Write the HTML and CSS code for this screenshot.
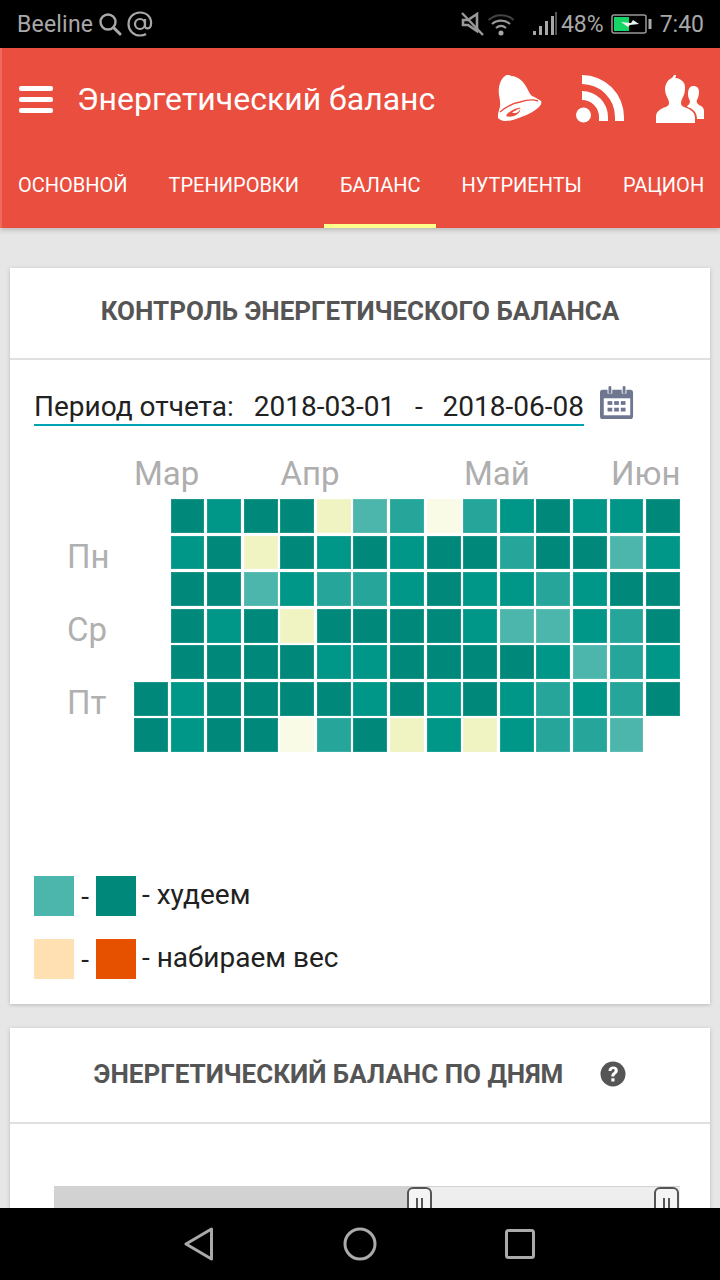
FILE: index.html
```html
<!DOCTYPE html>
<html>
<head>
    <meta charset="utf-8">
    <title>Энергетический баланс</title>
    <link rel="stylesheet" href="styles.css">
</head>
<body>
    <div class="statusbar">
        <div class="status-left">
            <span class="carrier">Beeline</span>
            <svg class="st-search" width="24" height="26" viewBox="0 0 24 26"><circle cx="10" cy="11" r="7.5" fill="none" stroke="#a8a8a8" stroke-width="2.4"/><path d="M15.5 16.5l6.5 6.5" stroke="#a8a8a8" stroke-width="3" stroke-linecap="round"/></svg>
            <svg class="st-at" width="26" height="26" viewBox="0 0 26 26"><circle cx="13" cy="13" r="5" fill="none" stroke="#a8a8a8" stroke-width="2.2"/><path d="M18 8v7c0 3.500 5.500 3.500 6 -1.500C25 6 19.500 1.500 13 1.500 6.500 1.500 1.500 6.500 1.500 13S6.500 24.500 13 24.500c2.500 0 4.500-.5 6-1.500" fill="none" stroke="#a8a8a8" stroke-width="2.2"/></svg>
        </div>
        <div class="status-right">
            <svg class="st-mute" width="24" height="24" viewBox="0 0 24 24"><path d="M3 8h5l9-6v17l-9-6H3z" fill="none" stroke="#999" stroke-width="2.600"/><path d="M2 1l21 22" stroke="#999" stroke-width="2.400"/></svg>
            <svg class="st-wifi" width="28" height="24" viewBox="0 0 28 24"><path d="M1.500 8C8.500 1.500 19.500 1.500 26.500 8" fill="none" stroke="#444" stroke-width="2"/><path d="M5 12c5-4.500 13-4.500 18 0" fill="none" stroke="#999" stroke-width="2.200"/><path d="M9 16c3-2.500 7-2.500 10 0" fill="none" stroke="#999" stroke-width="2.200"/><circle cx="14" cy="21" r="2.500" fill="#a8a8a8"/></svg>
            <svg class="st-signal" width="24" height="24" viewBox="0 0 24 24"><rect x="0" y="19" width="3" height="4" fill="#a8a8a8"/><rect x="6" y="14" width="3" height="9" fill="#a8a8a8"/><rect x="12" y="9" width="3" height="14" fill="#a8a8a8"/><rect x="18" y="4" width="3" height="19" fill="#a8a8a8"/><rect x="22" y="0" width="2" height="23" fill="#555"/></svg>
            <span class="battery-pct">48%</span>
            <svg class="st-battery" width="41" height="20" viewBox="0 0 41 20"><rect x="1" y="1" width="34" height="18" rx="2" fill="none" stroke="#999" stroke-width="1.500"/><rect x="3" y="3" width="15" height="14" fill="#14d566"/><path d="M10 8l10 1 2-3 6 4-9 1-2 2z" fill="#e8f2ea"/><rect x="37.500" y="5" width="3" height="10" fill="#aaa"/></svg>
            <span class="clock">7:40</span>
        </div>
    </div>

    <header class="appbar">
        <div class="toolbar">
            <div class="burger"><span></span><span></span><span></span></div>
            <div class="page-title">Энергетический баланс</div>
            <div class="toolbar-icons">
                <svg class="ic-bell" width="44" height="48" viewBox="0 0 44 48"><path d="M7 1c2-1.500 4-1.500 6 0 4 0 8 2 11 5 3 3 5 7 7 11 1 2 2 3 3 4 3 1 6 3 9 5 1 2 0 4-2 6-5 5-14 9-23 12-6 2-12 3-15 1-3-1-4-3-3-6l1-4C3 30 2 26 1 20 0 12 2 5 7 1z" fill="#fff"/><path d="M2 37c6-5 13-9 20-10 6-2 13-3 18-1" fill="none" stroke="#e94e3e" stroke-width="1.400"/><path d="M8 41c2-4 7-7 14-8.500 1 4-2 7-6 8.500-3 1-6 1-8 0z" fill="#e94e3e"/><path d="M14 38c2-2 5-3.500 8-4.500 0 2-2 4-4 4.500z" fill="#fff"/></svg>
                <svg class="ic-rss" width="48" height="48" viewBox="0 0 48 48"><circle cx="7.500" cy="40" r="7.500" fill="#fff"/><path d="M6 16A26 26 0 0 1 32 42v4h-9v-4A17 17 0 0 0 6 25z" fill="#fff"/><path d="M6 0A42 42 0 0 1 48 42v4h-9v-4A33 33 0 0 0 6 9z" fill="#fff"/></svg>
                <svg class="ic-users" width="48" height="48" viewBox="0 0 48 48"><path d="M20 0c0 1 0 2-1 3 4 0 7 2 9 5 1 2 1 4 1 6 0 3-1 6-2 8-1 2-2 4-2 6 0 2 1 3 3 4 5 2 11 4 11 11v5H0v-6c0-5 3-7 7-9 3-1 6-2 6-5 0-2-1-4-2-6-1-2-2-5-2-8 0-4 2-8 5-10 2-1 3-2 4-4z" fill="#fff"/><path d="M37 11c4 0 6 2 6 6 0 3-1 6-2 8-1 2 0 3 2 5 3 1 5 3 5 6v8h-7c0-6-3-9-7-11-2-1-3-1-3-2 2-1 3-3 3-5-1-2-2-4-2-7 0-5 2-8 5-8z" fill="#fff"/></svg>
            </div>
        </div>
        <nav class="tabs">
            <div class="tab">ОСНОВНОЙ</div>
            <div class="tab">ТРЕНИРОВКИ</div>
            <div class="tab active">БАЛАНС</div>
            <div class="tab">НУТРИЕНТЫ</div>
            <div class="tab">РАЦИОН</div>
        </nav>
    </header>

    <main class="content">
        <section class="card card-balance">
            <h2 class="card-title">КОНТРОЛЬ ЭНЕРГЕТИЧЕСКОГО БАЛАНСА</h2>
            <div class="card-body">
                <div class="period">
                    <div class="period-text">
                        <span>Период отчета:</span>
                        <span>2018-03-01</span>
                        <span>-</span>
                        <span>2018-06-08</span>
                    </div>
                    <svg class="cal-icon" width="34" height="34" viewBox="0 0 36 36"><path d="M4 4h4v4h5V4h10v4h5V4h4c2 0 3 1 3 3v25c0 2-1 3-3 3H3c-2 0-3-1-3-3V7c0-2 1-3 3-3z" fill="#6f7690"/><rect x="9" y="0" width="3" height="8" rx="1.500" fill="#6f7690"/><rect x="24" y="0" width="3" height="8" rx="1.500" fill="#6f7690"/><rect x="4" y="13" width="28" height="18" fill="#fff"/><g fill="#6f7690"><rect x="8" y="16" width="5" height="4"/><rect x="15" y="16" width="5" height="4"/><rect x="22" y="16" width="5" height="4"/><rect x="8" y="23" width="5" height="4"/><rect x="15" y="23" width="5" height="4"/><rect x="22" y="23" width="5" height="4"/></g></svg>
                </div>

                <div class="heatmap">
                    <div class="days">
                        <span>Пн</span>
                        <span>Ср</span>
                        <span>Пт</span>
                    </div>
                    <div class="map">
                        <div class="months">
                            <span class="m-mar">Мар</span>
                            <span class="m-apr">Апр</span>
                            <span class="m-may">Май</span>
                            <span class="m-jun">Июн</span>
                        </div>
                        <div class="cells">
                            <i class="c0"></i><i class="c1"></i><i class="c2"></i><i class="c1"></i><i class="c1"></i><i class="c5"></i><i class="c4"></i><i class="c3"></i><i class="c6"></i><i class="c3"></i><i class="c2"></i><i class="c1"></i><i class="c2"></i><i class="c2"></i><i class="c1"></i>
                            <i class="c0"></i><i class="c2"></i><i class="c1"></i><i class="c5"></i><i class="c1"></i><i class="c2"></i><i class="c1"></i><i class="c2"></i><i class="c1"></i><i class="c1"></i><i class="c3"></i><i class="c1"></i><i class="c1"></i><i class="c4"></i><i class="c2"></i>
                            <i class="c0"></i><i class="c1"></i><i class="c1"></i><i class="c4"></i><i class="c2"></i><i class="c3"></i><i class="c3"></i><i class="c2"></i><i class="c1"></i><i class="c2"></i><i class="c2"></i><i class="c3"></i><i class="c2"></i><i class="c1"></i><i class="c1"></i>
                            <i class="c0"></i><i class="c1"></i><i class="c2"></i><i class="c1"></i><i class="c5"></i><i class="c1"></i><i class="c1"></i><i class="c1"></i><i class="c1"></i><i class="c2"></i><i class="c4"></i><i class="c4"></i><i class="c2"></i><i class="c3"></i><i class="c1"></i>
                            <i class="c0"></i><i class="c1"></i><i class="c1"></i><i class="c1"></i><i class="c1"></i><i class="c2"></i><i class="c2"></i><i class="c1"></i><i class="c1"></i><i class="c1"></i><i class="c1"></i><i class="c2"></i><i class="c4"></i><i class="c3"></i><i class="c2"></i>
                            <i class="c1"></i><i class="c2"></i><i class="c1"></i><i class="c1"></i><i class="c1"></i><i class="c1"></i><i class="c2"></i><i class="c1"></i><i class="c2"></i><i class="c1"></i><i class="c2"></i><i class="c3"></i><i class="c2"></i><i class="c3"></i><i class="c1"></i>
                            <i class="c1"></i><i class="c2"></i><i class="c1"></i><i class="c1"></i><i class="c6"></i><i class="c3"></i><i class="c1"></i><i class="c5"></i><i class="c2"></i><i class="c5"></i><i class="c2"></i><i class="c3"></i><i class="c3"></i><i class="c4"></i><i class="c0"></i>
                        </div>
                    </div>
                </div>

                <div class="legend">
                    <div class="legend-row">
                        <span class="swatch teal-light"></span><span class="dash">-</span><span class="swatch teal-dark"></span><span class="legend-text">- худеем</span>
                    </div>
                    <div class="legend-row">
                        <span class="swatch orange-light"></span><span class="dash">-</span><span class="swatch orange-dark"></span><span class="legend-text">- набираем вес</span>
                    </div>
                </div>
            </div>
        </section>

        <section class="card card-days">
            <h2 class="card-title title-help">
                ЭНЕРГЕТИЧЕСКИЙ БАЛАНС ПО ДНЯМ
                <svg class="help" width="26" height="26" viewBox="0 0 26 26"><circle cx="13" cy="13" r="12.500" fill="#555"/><path d="M8.500 10c0-3 2-4.500 4.700-4.500 2.800 0 4.600 1.600 4.600 4 0 3.500-3.500 3.500-3.500 6h-3c0-4 3.300-4 3.300-6 0-.9-.6-1.400-1.500-1.400-1 0-1.600.7-1.600 1.900z" fill="#fff"/><rect x="11.300" y="17.300" width="3.200" height="3.200" fill="#fff"/></svg>
            </h2>
            <div class="slider">
                <div class="slider-fill"></div>
                <div class="slider-rest"></div>
                <div class="handle handle-a"><b></b><b></b></div>
                <div class="handle handle-b"><b></b><b></b></div>
            </div>
        </section>
    </main>

    <div class="navbar">
        <svg width="32" height="34" viewBox="0 0 32 34"><path d="M28.500 2L3 17l25.500 15z" fill="none" stroke="#aaa" stroke-width="3" stroke-linejoin="round"/></svg>
        <svg width="34" height="34" viewBox="0 0 34 34"><circle cx="17" cy="17" r="15" fill="none" stroke="#aaa" stroke-width="3"/></svg>
        <svg width="30" height="30" viewBox="0 0 30 30"><rect x="1.500" y="1.500" width="27" height="27" rx="2" fill="none" stroke="#aaa" stroke-width="3"/></svg>
    </div>
</body>
</html>
```

FILE: styles.css
```css
* {
    box-sizing: border-box;
}
html, body {
    margin: 0;
    padding: 0;
}
body {
    width: 720px;
    height: 1280px;
    overflow: hidden;
    background-color: #e6e6e6;
    font-family: Roboto, "Noto Sans", sans-serif;
    color: #212121;
}

/* статус-бар */
.statusbar {
    display: flex;
    justify-content: space-between;
    align-items: center;
    height: 48px;
    padding: 0 16px 0 17px;
    background-color: #000;
    color: #a8a8a8;
    font-size: 23px;
}
.status-left, .status-right {
    display: flex;
    align-items: center;
}
.carrier {
    margin-right: 5px;
    letter-spacing: .2px;
}
.st-search {
    margin-right: 5px;
}
.st-mute {
    margin-right: 3px;
}
.st-wifi {
    margin-right: 18px;
}
.st-signal {
    margin-right: 4px;
}
.battery-pct {
    margin-right: 7px;
}
.st-battery {
    margin-right: 8px;
}

/* шапка */
.appbar {
    height: 180px;
    background-color: #e94e3e;
    border-left: 2px solid #ee6a5c;
    box-shadow: 0 2px 5px rgba(0, 0, 0, .2);
    color: #fff;
}
.toolbar {
    display: flex;
    align-items: center;
    height: 102px;
    padding-left: 17px;
}
.burger {
    display: flex;
    flex-direction: column;
    gap: 6px;
    width: 34px;
    margin-right: 24px;
}
.burger span {
    display: block;
    height: 5px;
    border-radius: 2px;
    background-color: #fff;
}
.page-title {
    font-size: 32px;
    white-space: nowrap;
}
.toolbar-icons {
    display: flex;
    align-items: center;
    margin-left: auto;
    padding: 0 16px 0 0;
}
.ic-bell {
    margin-right: 34px;
}
.ic-rss {
    margin-right: 32px;
}
.tabs {
    display: flex;
    gap: 9px;
    height: 78px;
}
.tab {
    display: flex;
    align-items: center;
    height: 78px;
    padding: 0 16px 8px;
    font-size: 20px;
    white-space: nowrap;
}
.tab.active {
    border-bottom: 4px solid #ffff8d;
    padding-bottom: 4px;
}

/* карточки */
.content {
    display: flex;
    flex-direction: column;
    gap: 24px;
    padding: 40px 10px 0;
}
.card {
    background-color: #fff;
    box-shadow: 0 1px 4px rgba(0, 0, 0, .2);
}
.card-title {
    display: flex;
    justify-content: center;
    align-items: center;
    height: 92px;
    margin: 0;
    padding-bottom: 4px;
    border-bottom: 2px solid #e0e0e0;
    color: #555;
    font-size: 26px;
    font-weight: 700;
}
.title-help {
    height: 96px;
    padding-bottom: 2px;
    gap: 37px;
}
.card-body {
    padding: 24px 0 25px 24px;
}

.period {
    display: flex;
    align-items: flex-start;
}
.period-text {
    display: flex;
    justify-content: space-between;
    width: 550px;
    height: 42px;
    padding-top: 6px;
    border-bottom: 2px solid #00a5b5;
    font-size: 28px;
    white-space: nowrap;
}
.cal-icon {
    margin: 2px 0 0 16px;
}

/* тепловая карта */
.heatmap {
    display: flex;
    height: 326px;
    margin-top: 26px;
}
.days {
    display: flex;
    flex-direction: column;
    width: 100px;
    padding: 85px 0 0 33px;
    color: #b0b0b0;
    font-size: 33px;
}
.days span {
    height: 73px;
}
.months {
    display: flex;
    height: 47px;
    padding-top: 2px;
    color: #aeaeae;
    font-size: 33px;
}
.m-mar {
    width: 146.500px;
}
.m-apr {
    width: 183.500px;
}
.m-may {
    width: 147px;
}
.cells {
    display: grid;
    grid-template-columns: repeat(15, 33.900px);
    grid-auto-rows: 33.900px;
    gap: 2.700px;
    width: 546px;
}
.cells i {
    display: block;
    box-shadow: inset 0 0 0 1px rgba(255, 255, 255, .1);
}
.c1 { background-color: #00897b; }
.c2 { background-color: #009688; }
.c3 { background-color: #26a69a; }
.c4 { background-color: #4db6ac; }
.c5 { background-color: #f0f4c3; }
.c6 { background-color: #f9fbe7; }

.legend {
    display: flex;
    flex-direction: column;
    gap: 23px;
    margin-top: 98px;
}
.legend-row {
    display: flex;
    align-items: center;
    height: 40px;
    font-size: 28px;
}
.swatch {
    width: 40px;
    height: 40px;
}
.dash {
    width: 22px;
    text-align: center;
}
.legend-text {
    margin-left: 6px;
    padding-bottom: 3px;
}
.teal-light { background-color: #4db6ac; }
.teal-dark { background-color: #00897b; }
.orange-light { background-color: #ffe0b2; }
.orange-dark { background-color: #e65100; }

/* слайдер */
.slider {
    display: flex;
    position: relative;
    height: 60px;
    margin: 62px 30px 0 44px;
}
.slider-fill {
    width: 366px;
    background-color: #d2d2d2;
}
.slider-rest {
    flex: 1;
    border-top: 1px solid #d2d2d2;
    background-color: #eee;
}
.handle {
    display: flex;
    justify-content: center;
    gap: 3px;
    position: absolute;
    top: 1px;
    width: 25px;
    height: 50px;
    padding-top: 9px;
    border: 2px solid #555;
    border-radius: 6px;
    background-color: #f4f4f4;
}
.handle b {
    display: block;
    width: 2px;
    height: 20px;
    background-color: #555;
}
.handle-a {
    left: 353px;
}
.handle-b {
    left: 600px;
}

/* системная панель */
.navbar {
    display: flex;
    justify-content: space-between;
    align-items: center;
    position: fixed;
    left: 0;
    bottom: 0;
    width: 720px;
    height: 72px;
    padding: 0 185px 0 183px;
    background-color: #000;
}
```
